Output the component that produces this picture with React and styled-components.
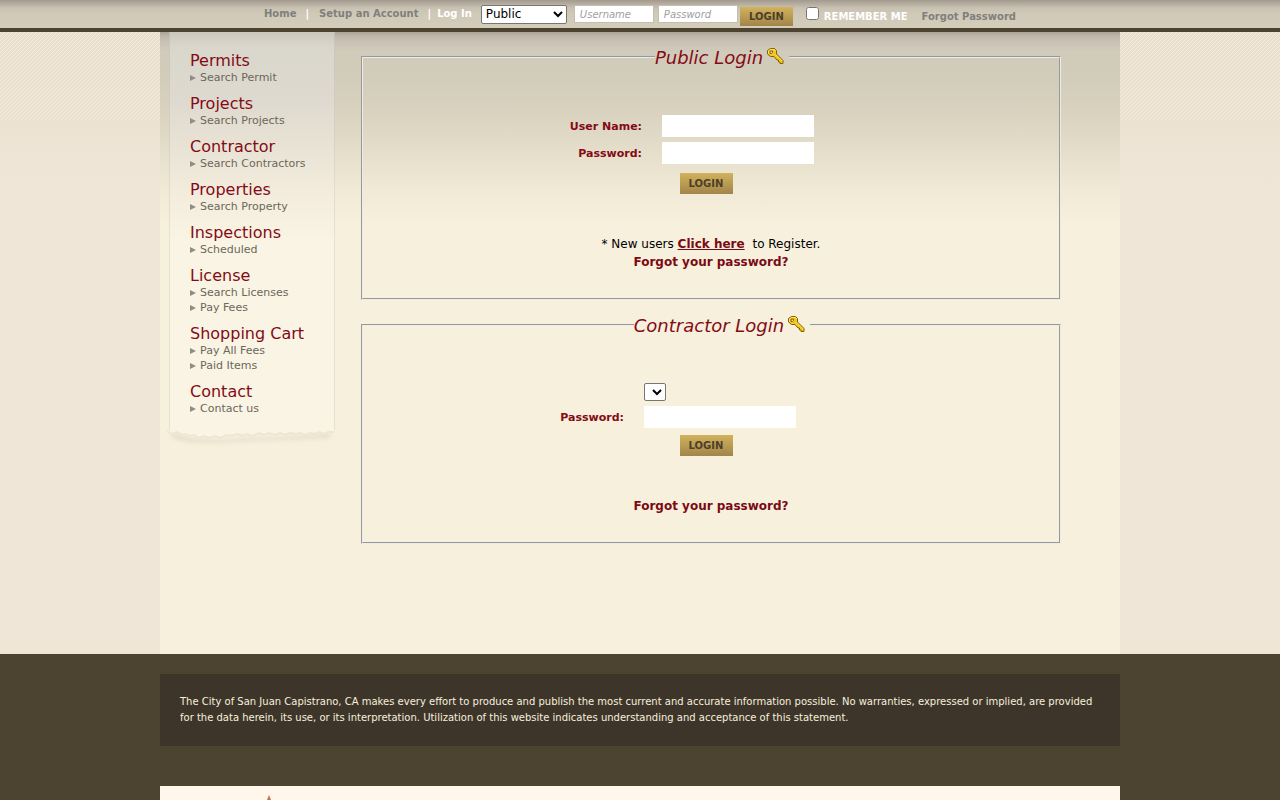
import React from "react";
import styled, { createGlobalStyle } from "styled-components";

const sans = '"DejaVu Sans", Verdana, sans-serif';
const maroon = "#840b16";

const GlobalStyle = createGlobalStyle`
  *, *::before, *::after { box-sizing: border-box; }
  body {
    margin: 0;
    background: #4c4431;
    font-family: ${sans};
    font-size: 12px;
  }
  button, input, select { font-family: ${sans}; margin: 0; }
`;

const TopBar = styled.header`
  display: flex;
  justify-content: center;
  align-items: flex-start;
  min-height: 32px;
  padding-top: 5px;
  border-bottom: 4px solid #4c4431;
  background: linear-gradient(#a29a8d 0, #b5ada0 4px, #c9c2b2 8px, #d0c9b8 14px, #d3cdba 100%);
  font-size: 10px;
  font-weight: bold;
  line-height: 18px;
  color: #fff;
`;

const TopNav = styled.nav`
  display: flex;
  margin-right: 9px;
`;

const Divider = styled.span`
  margin: 0 ${(p) => (p.$tight ? "6px" : "10px")} 0 9px;
`;

const TopLink = styled.a`
  color: #807f7c;
  text-decoration: none;
`;

const TopForm = styled.form`
  display: flex;
  align-items: flex-start;
`;

const AccountSelect = styled.select`
  width: 86px;
  height: 19px;
  margin-right: 7px;
  padding: 0 0 2px;
  font-size: 12px;
  color: #000;
  background: #fff;
  border: 1px solid #767676;
  border-radius: 2px;
`;

const TopInput = styled.input`
  width: 80px;
  height: 18px;
  margin-right: ${(p) => p.$gap};
  padding: 1px 5px;
  border: 1px solid #c4beb0;
  background: #fff;
  font-size: 10px;
  &::placeholder {
    color: #a0a0a0;
    font-style: italic;
  }
`;

const LoginButton = styled.button`
  width: 53px;
  height: ${(p) => (p.$compact ? "19px" : "21px")};
  padding: 0;
  border: 0;
  background: linear-gradient(#d2b25c, #a1854a);
  color: #4c3f28;
  font-size: 10px;
  font-weight: bold;
  cursor: pointer;
`;

const TopActions = styled.div`
  display: flex;
  padding-top: 2px;
  line-height: 19px;
`;

const Remember = styled.label`
  display: flex;
  gap: 5px;
  margin: 0 14px 0 13px;
  input { width: 13px; height: 13px; }
`;

const Backdrop = styled.div`
  position: relative;
  background: linear-gradient(#e7decb 0, #ebe2d2 88px, #efe6d8 150px, #efe6d8 100%);
  &::before {
    content: "";
    position: absolute;
    inset: 0 0 auto;
    height: 88px;
    background: linear-gradient(135deg, #f5eee1 12.5%, transparent 12.5% 50%, #f5eee1 50% 62.5%, transparent 62.5%) 0 0 / 4px 4px;
    mask-image: linear-gradient(#000, rgba(0, 0, 0, 0.7));
  }
`;

const Content = styled.div`
  position: relative;
  display: flex;
  align-items: flex-start;
  max-width: 960px;
  min-height: 622px;
  margin: 0 auto;
  padding-right: 59px;
  background: linear-gradient(#aca497 0, #beb6a9 4px, #cac3b5 10px, #d1cbbb 20px, #d2ccba 45px, #d8d2bf 80px, #e5decb 120px, #f1ead6 160px, #f7f0dd 195px, #f7f0dd 100%);
`;

const Sidebar = styled.aside`
  flex: none;
  width: 166px;
  margin: 0 26px 0 9px;
`;

const Paper = styled.nav`
  padding: 19px 0 5px 20px;
  border: 1px solid rgba(140, 130, 110, 0.16);
  border-width: 0 1px;
  background: linear-gradient(#cbc7bc 0, #d9d6cb 14px, #dedacf 70px, #eae4d6 120px, #f4edde 165px, #faf4e5 210px, #faf4e5 100%);
`;

const TornEdge = styled.svg`
  display: block;
  width: 100%;
  height: 18px;
  overflow: visible;
`;

const MenuHeading = styled.h2`
  margin: 0;
  font-size: 16px;
  font-weight: normal;
  line-height: 19px;
  color: ${maroon};
`;

const MenuList = styled.ul`
  list-style: none;
  margin: 0 0 9px;
  padding: 0;
`;

const MenuItem = styled.li`
  display: flex;
  align-items: center;
  gap: 4px;
  height: 15px;
  font-size: 11px;
  a { color: #6b6759; text-decoration: none; }
`;

const Main = styled.main`
  flex: 1;
  min-width: 0;
  padding-top: 14px;
`;

const Panel = styled.fieldset`
  margin: 0 0 14px;
  padding: 0 0 27px 22px;
  border: 2px groove #ececec;
`;

const PanelTitle = styled.legend`
  display: flex;
  align-items: center;
  gap: 4px;
  height: 22px;
  margin: 0 auto;
  padding: 0 5px 0 0;
  font-size: 18px;
  font-style: italic;
  color: ${maroon};
`;

const KeySvg = styled.svg`
  align-self: flex-start;
`;

const LoginForm = styled.form`
  padding-top: 47px;
`;

const Fields = styled.div`
  display: grid;
  grid-template-columns: ${(p) => p.$labelWidth} 152px;
  gap: 5px 20px;
  align-items: center;
`;

const FieldLabel = styled.label`
  text-align: right;
  font-size: 11px;
  font-weight: bold;
  color: ${maroon};
`;

const FieldInput = styled.input`
  width: 152px;
  height: 22px;
  padding: 2px 4px;
  border: 0;
  background: #fff;
  font-size: 11px;
`;

const ContractorSelect = styled.select`
  grid-column: 2;
  width: 22px;
  height: 18px;
  padding: 0;
  background: #fff;
  border: 1px solid #767676;
  border-radius: 2px;
`;

const Submit = styled.div`
  display: flex;
  justify-content: center;
  padding: ${(p) => p.$top} 32px 0 0;
`;

const Notes = styled.div`
  padding: 41px 22px 0 0;
  text-align: center;
  line-height: 18px;
  p { margin: 0; }
`;

const NoteLink = styled.a`
  color: #7a0a14;
  font-weight: bold;
  text-decoration: ${(p) => (p.$underlined ? "underline" : "none")};
  margin-right: ${(p) => (p.$underlined ? "4px" : "0")};
`;

const Footer = styled.footer`
  max-width: 960px;
  margin: 0 auto;
  padding-top: 20px;
`;

const Disclaimer = styled.p`
  margin: 0 0 40px;
  padding: 20px;
  background: #3e352a;
  color: #f7f0dd;
  font-size: 10px;
  line-height: 16px;
`;

const LogoStrip = styled.div`
  height: 14px;
  overflow: hidden;
  background: #fff6ec;
  padding: 9px 0 0 103px;
  svg { display: block; }
`;

const menu = [
  ["Permits", ["Search Permit"]],
  ["Projects", ["Search Projects"]],
  ["Contractor", ["Search Contractors"]],
  ["Properties", ["Search Property"]],
  ["Inspections", ["Scheduled"]],
  ["License", ["Search Licenses", "Pay Fees"]],
  ["Shopping Cart", ["Pay All Fees", "Paid Items"]],
  ["Contact", ["Contact us"]],
];

function KeyIcon() {
  return (
    <KeySvg width="17" height="19" viewBox="0 0 17 19" aria-hidden="true">
      <path
        d="M3.5 2.5h4l2 2v3.500l6.500 6.500v3h-3v-1.500h-1.500v-2h-1.500l-3-3.500h-3.500l-3-2.500v-3.500z"
        fill="#f5c71c"
        stroke="#86600a"
      />
      <path d="M1.500 7.500v-2.500l2.500-1.500h3l1.500 1.500" fill="none" stroke="#ffea5e" />
      <path d="M8.500 8.500l6.500 6.500" fill="none" stroke="#ffdf45" />
      <path d="M3 5h2.500v1.500l-1 1h-1.500z" fill="#e4dec8" stroke="#86600a" />
    </KeySvg>
  );
}

function Arrow() {
  return (
    <svg width="6" height="6" viewBox="0 0 6 6" aria-hidden="true">
      <path d="M0 0L6 3L0 6z" fill="#918d82" />
    </svg>
  );
}

function PaperEdge() {
  return (
    <TornEdge viewBox="0 0 166 18" preserveAspectRatio="none" aria-hidden="true">
      <defs>
        <filter id="edge-shadow" x="-5%" y="-50%" width="110%" height="220%">
          <feGaussianBlur stdDeviation="2" />
        </filter>
      </defs>
      <path d="M3 3L22 8L48 10L80 8L120 7L163 3L160 8L120 10L80 11L48 13L20 12L3 8z" fill="#e6dec8" filter="url(#edge-shadow)" />
      <path d="M0 0H166L164 3L160 1L157 4L152 2L148 4L143 2L139 5L134 3L128 4L124 2L119 5L113 3L108 5L103 3L97 5L93 3L87 6L81 4L76 6L71 3L66 6L60 4L55 7L49 6L44 8L38 6L33 8L28 6L23 7L19 4L15 6L11 2L6 4L2 3z" fill="#faf4e5" />
      <path d="M-2 1L3 4L8 2L13 5L17 4L20 6L25 5L30 8L35 6L41 8L46 6L52 8L57 5L62 6L68 4L73 6L78 4L84 6L90 3L95 5L100 3L106 5L111 3L116 5L121 3L126 4L131 3L136 5L141 3L146 4L150 2L155 4L159 2L165 2" fill="none" stroke="#ece6d3" strokeWidth="2" />
    </TornEdge>
  );
}

export default function App() {
  return (
    <>
      <GlobalStyle />
      <TopBar>
        <TopNav>
          <TopLink href="#home">Home</TopLink>
          <Divider>|</Divider>
          <TopLink href="#setup">Setup an Account</TopLink>
          <Divider $tight>|</Divider>
          <span>Log In</span>
        </TopNav>
        <TopForm onSubmit={(e) => e.preventDefault()}>
          <AccountSelect aria-label="Account type">
            <option>Public</option>
            <option>Contractor</option>
          </AccountSelect>
          <TopInput $gap="4px" placeholder="Username" aria-label="Username" />
          <TopInput $gap="2px" type="password" placeholder="Password" aria-label="Password" />
          <TopActions>
            <LoginButton $compact>LOGIN</LoginButton>
            <Remember>
              <input type="checkbox" />
              REMEMBER ME
            </Remember>
            <TopLink href="#forgot">Forgot Password</TopLink>
          </TopActions>
        </TopForm>
      </TopBar>

      <Backdrop>
        <Content>
          <Sidebar>
            <Paper>
              {menu.map(([title, items]) => (
                <React.Fragment key={title}>
                  <MenuHeading>{title}</MenuHeading>
                  <MenuList>
                    {items.map((item) => (
                      <MenuItem key={item}>
                        <Arrow />
                        <a href="#menu">{item}</a>
                      </MenuItem>
                    ))}
                  </MenuList>
                </React.Fragment>
              ))}
            </Paper>
            <PaperEdge />
          </Sidebar>

          <Main>
            <Panel>
              <PanelTitle>
                Public Login
                <KeyIcon />
              </PanelTitle>
              <LoginForm onSubmit={(e) => e.preventDefault()}>
                <Fields $labelWidth="257px">
                  <FieldLabel htmlFor="public-user">User Name:</FieldLabel>
                  <FieldInput id="public-user" />
                  <FieldLabel htmlFor="public-pass">Password:</FieldLabel>
                  <FieldInput id="public-pass" type="password" />
                </Fields>
                <Submit $top="9px">
                  <LoginButton>LOGIN</LoginButton>
                </Submit>
              </LoginForm>
              <Notes>
                <p>
                  * New users <NoteLink $underlined href="#register">Click here</NoteLink> to Register.
                </p>
                <p>
                  <NoteLink href="#forgot">Forgot your password?</NoteLink>
                </p>
              </Notes>
            </Panel>

            <Panel>
              <PanelTitle>
                Contractor Login
                <KeyIcon />
              </PanelTitle>
              <LoginForm onSubmit={(e) => e.preventDefault()}>
                <Fields $labelWidth="239px">
                  <ContractorSelect aria-label="Contractor" />
                  <FieldLabel htmlFor="contractor-pass">Password:</FieldLabel>
                  <FieldInput id="contractor-pass" type="password" />
                </Fields>
                <Submit $top="7px">
                  <LoginButton>LOGIN</LoginButton>
                </Submit>
              </LoginForm>
              <Notes>
                <p>
                  <NoteLink href="#forgot">Forgot your password?</NoteLink>
                </p>
              </Notes>
            </Panel>
          </Main>
        </Content>
      </Backdrop>

      <Footer>
        <Disclaimer>
          The City of San Juan Capistrano, CA makes every effort to produce and publish the most current and accurate
          information possible. No warranties, expressed or implied, are provided for the data herein, its use, or its
          interpretation. Utilization of this website indicates understanding and acceptance of this statement.
        </Disclaimer>
        <LogoStrip>
          <svg width="12" height="5" viewBox="0 0 12 5" aria-hidden="true">
            <path d="M6 0L8 5H4z" fill="#c9704f" />
          </svg>
        </LogoStrip>
      </Footer>
    </>
  );
}
